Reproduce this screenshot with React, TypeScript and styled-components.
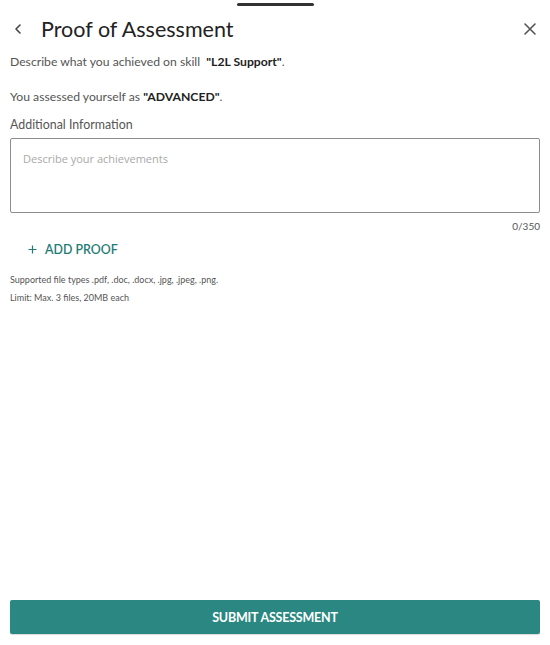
import React from "react";
import styled, { createGlobalStyle } from "styled-components";

const GlobalStyle = createGlobalStyle`
  html, body {
    margin: 0;
    padding: 0;
    background: #ffffff;
  }
  body {
    font-family: Lato, "Open Sans", sans-serif;
    color: #333;
  }
  * {
    box-sizing: border-box;
  }
`;

const Sheet = styled.div`
  width: 550px;
  height: 645px;
  display: flex;
  flex-direction: column;
  padding: 0 10px 11px;
  background: #fff;
`;

const Handle = styled.div`
  align-self: center;
  width: 77px;
  height: 3px;
  margin-top: 3px;
  background: #333;
  border-radius: 2px;
`;

const Header = styled.div`
  display: flex;
  align-items: center;
  height: 44px;
  margin-top: 1px;
`;

const IconButton = styled.button<{ $end?: boolean }>`
  display: flex;
  align-items: center;
  justify-content: center;
  padding: 0;
  margin-right: ${(p) => (p.$end ? 3 : 0)}px;
  border: none;
  background: none;
  color: #444;
  cursor: pointer;
`;

const Title = styled.h1`
  flex: 1;
  margin: 0 0 0 15px;
  font-size: 21.5px;
  font-weight: 400;
  color: #222;
`;

const Text = styled.p<{ $gap?: number }>`
  margin: ${(p) => p.$gap ?? 0}px 0 0;
  font-size: 12.2px;
  line-height: 18px;
  color: #555;

  b {
    color: #222;
    font-weight: 700;
  }
`;

const Label = styled.label`
  display: block;
  margin-top: 10px;
  font-size: 12.4px;
  line-height: 18px;
  color: #555;
`;

const TextArea = styled.textarea`
  display: block;
  width: 100%;
  height: 75px;
  margin-top: 4px;
  padding: 12px 12px;
  border: 1px solid #8d8d8d;
  border-radius: 2px;
  resize: none;
  font-family: "Open Sans", "Liberation Sans", sans-serif;
  font-size: 11px;
  color: #333;
  outline: none;

  &::placeholder {
    color: #a9a9a9;
  }
`;

const Counter = styled.div`
  margin-top: 7px;
  text-align: right;
  font-size: 10px;
  color: #555;
`;

const AddProof = styled.button`
  display: flex;
  align-items: center;
  gap: 8px;
  margin: 10px 0 0 18px;
  padding: 0;
  border: none;
  background: none;
  font-family: Lato, sans-serif;
  font-size: 12.4px;
  font-weight: 600;
  color: #1f7c76;
  cursor: pointer;
`;

const Hint = styled.p<{ $gap: number }>`
  margin: ${(p) => p.$gap}px 0 0;
  font-size: 9px;
  line-height: 12px;
  color: #555;
`;

const Spacer = styled.div`
  flex: 1;
`;

const Submit = styled.button`
  width: 100%;
  height: 34px;
  border: none;
  border-radius: 2px;
  background: #2a8781;
  box-shadow: 0 1px 1px rgba(0, 0, 0, 0.15);
  color: #fff;
  font-family: Lato, sans-serif;
  font-size: 12.5px;
  font-weight: 700;
  letter-spacing: -0.2px;
  cursor: pointer;
`;

function ChevronLeft() {
  return (
    <svg width="16" height="16" viewBox="0 0 16 16" fill="none">
      <path d="M10 4 L6 8 L10 12" stroke="#444" strokeWidth="1.6" strokeLinecap="round" strokeLinejoin="round" />
    </svg>
  );
}

function CloseIcon() {
  return (
    <svg width="14" height="14" viewBox="0 0 14 14" fill="none">
      <path d="M2 2 L12 12 M12 2 L2 12" stroke="#555" strokeWidth="1.6" strokeLinecap="round" />
    </svg>
  );
}

function PlusIcon() {
  return (
    <svg width="9" height="9" viewBox="0 0 9 9" fill="none">
      <path d="M4.5 0.5 V8.5 M0.5 4.5 H8.5" stroke="#1f7c76" strokeWidth="1.2" />
    </svg>
  );
}

export default function App() {
  return (
    <>
      <GlobalStyle />
      <Sheet>
        <Handle />
        <Header>
          <IconButton aria-label="Back">
            <ChevronLeft />
          </IconButton>
          <Title>Proof of Assessment</Title>
          <IconButton aria-label="Close" $end>
            <CloseIcon />
          </IconButton>
        </Header>
        <Text $gap={2}>
          Describe what you achieved on skill&nbsp; <b>"L2L Support"</b>.
        </Text>
        <Text $gap={17}>
          You assessed yourself as <b>"ADVANCED"</b>.
        </Text>
        <Label htmlFor="info">Additional Information</Label>
        <TextArea id="info" placeholder="Describe your achievements" maxLength={350} />
        <Counter>0/350</Counter>
        <AddProof>
          <PlusIcon />
          ADD PROOF
        </AddProof>
        <Hint $gap={17}>Supported file types .pdf, .doc, .docx, .jpg, .jpeg, .png.</Hint>
        <Hint $gap={6}>Limit: Max. 3 files, 20MB each</Hint>
        <Spacer />
        <Submit>SUBMIT ASSESSMENT</Submit>
      </Sheet>
    </>
  );
}
